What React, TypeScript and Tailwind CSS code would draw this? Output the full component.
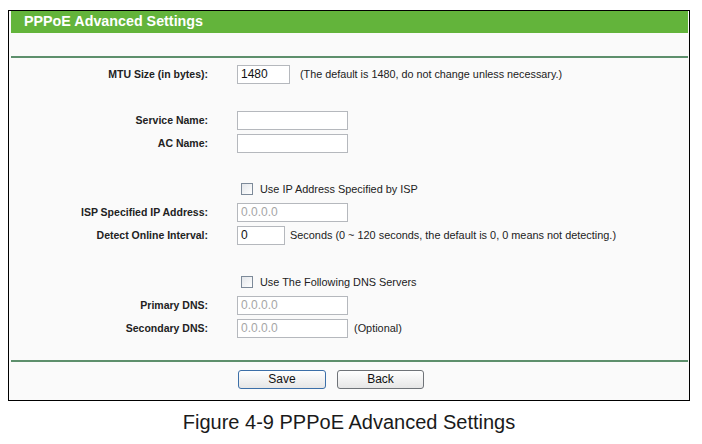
import React from 'react';

const font = { fontFamily: '"Liberation Sans", Arial, sans-serif' };

function Label({ children }: { children?: React.ReactNode }) {
  return (
    <div className="w-[200px] shrink-0 pr-px text-right text-[10.5px] font-bold text-[#222]">
      {children}
    </div>
  );
}

function Field({ value, width, placeholder }: { value?: string; width: string; placeholder?: boolean }) {
  return (
    <div
      className={`${width} h-[19px] shrink-0 border border-[#b5b8bd] bg-white pl-[3px] text-[12px] leading-[17px] ${
        placeholder ? 'text-[#a6a6a6]' : 'text-[#111]'
      }`}
    >
      {value}
    </div>
  );
}

function Row({ label, children }: { label?: string; children: React.ReactNode }) {
  return (
    <div className="flex h-[23px] items-center">
      <Label>{label}</Label>
      <div className="ml-[28px] flex items-center">{children}</div>
    </div>
  );
}

function Check({ text }: { text: string }) {
  return (
    <Row>
      <div className="ml-[4px] h-[12px] w-[12px] border border-[#7d8a99] bg-gradient-to-br from-[#e3e6ea] to-white" />
      <span className="ml-[7px] text-[10.9px] text-[#222]">{text}</span>
    </Row>
  );
}

export default function App() {
  return (
    <div className="h-[444px] w-[702px] bg-white" style={font}>
      <div className="pl-[8px] pt-[10px]">
        {/* frame */}
        <div className="w-[682px] border border-black bg-[#fafafa] pb-[11px] pl-[2px]">
          <div className="flex h-[22px] w-[677px] items-center bg-[#63b43b] pl-[13px] text-[14.3px] font-bold text-white">
            PPPoE Advanced Settings
          </div>
          <div className="h-[23px]" />
          <div className="h-[2px] w-[677px] bg-[#5d8f6c]" />

          <div className="pt-[5px] -ml-[2px]">
            <Row label="MTU Size (in bytes):">
              <Field value="1480" width="w-[53px]" />
              <span className="ml-[10px] text-[10.8px] text-[#222]">
                (The default is 1480, do not change unless necessary.)
              </span>
            </Row>
            <div className="h-[23px]" />
            <Row label="Service Name:">
              <Field width="w-[111px]" />
            </Row>
            <Row label="AC Name:">
              <Field width="w-[111px]" />
            </Row>
            <div className="h-[23px]" />
            <Check text="Use IP Address Specified by ISP" />
            <Row label="ISP Specified IP Address:">
              <Field value="0.0.0.0" width="w-[111px]" placeholder />
            </Row>
            <Row label="Detect Online Interval:">
              <Field value="0" width="w-[48px]" />
              <span className="ml-[5px] text-[10.9px] text-[#222]">
                Seconds (0 ~ 120 seconds, the default is 0, 0 means not detecting.)
              </span>
            </Row>
            <div className="h-[24px]" />
            <Check text="Use The Following DNS Servers" />
            <Row label="Primary DNS:">
              <Field value="0.0.0.0" width="w-[111px]" placeholder />
            </Row>
            <Row label="Secondary DNS:">
              <Field value="0.0.0.0" width="w-[111px]" placeholder />
              <span className="ml-[6px] text-[10.9px] text-[#222]">(Optional)</span>
            </Row>
          </div>

          <div className="mt-[20px] h-[2px] w-[677px] bg-[#5d8f6c]" />
          <div className="mt-[8px] flex pl-[227px]">
            <button className="h-[19px] w-[88px] rounded-[3px] border border-[#3c6fa8] bg-gradient-to-b from-white to-[#e6e6e6] text-[12px] leading-[17px] text-[#111]">
              Save
            </button>
            <button className="ml-[11px] h-[19px] w-[87px] rounded-[3px] border border-[#6f7378] bg-gradient-to-b from-white to-[#e6e6e6] text-[12px] leading-[17px] text-[#111]">
              Back
            </button>
          </div>
        </div>
        <div className="mt-[9px] w-[682px] text-center text-[20px] leading-[24px] text-[#1a1a1a]">
          Figure 4-9 PPPoE Advanced Settings
        </div>
      </div>
    </div>
  );
}
